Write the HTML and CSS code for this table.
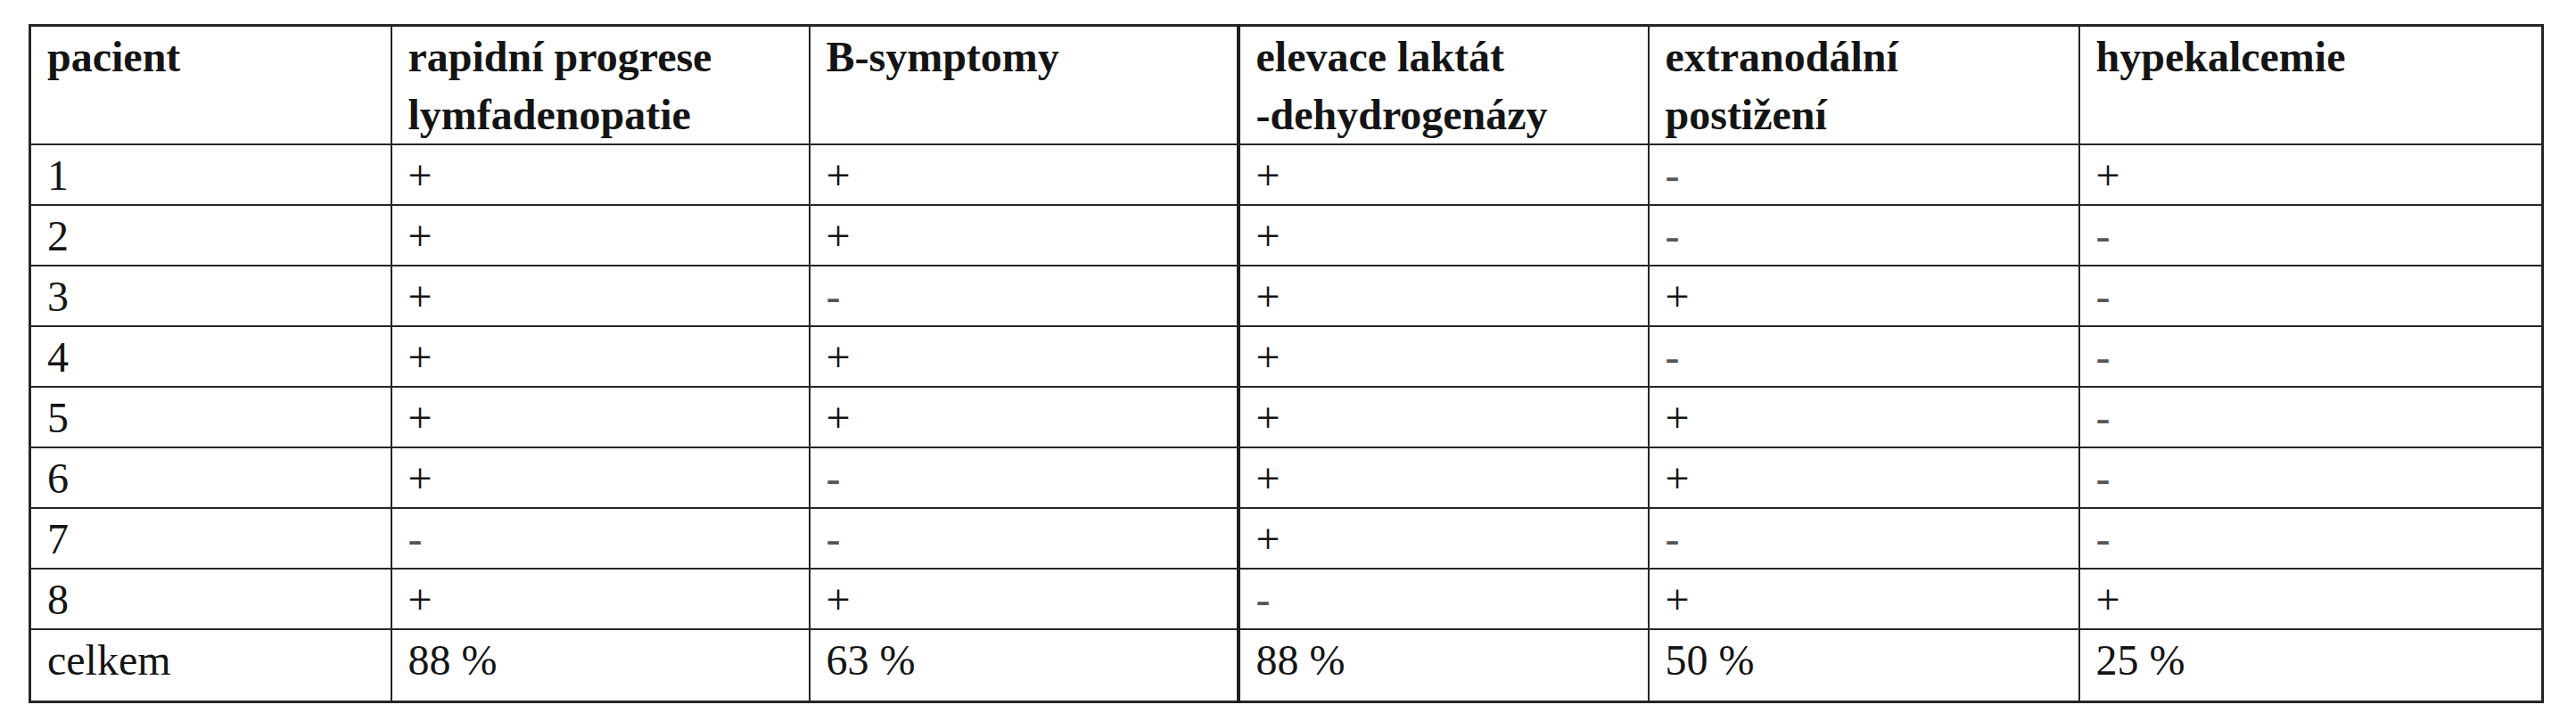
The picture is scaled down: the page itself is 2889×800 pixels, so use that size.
FILE: index.html
```html
<!DOCTYPE html>
<html lang="cs">
<head>
<meta charset="utf-8">
<title>Tabulka</title>
<link rel="stylesheet" href="styles.css">
</head>
<body>
<table class="data">
  <colgroup>
    <col class="c1"><col class="c2"><col class="c3"><col class="c4"><col class="c5"><col class="c6">
  </colgroup>
  <thead>
    <tr class="head">
      <th>pacient</th>
      <th>rapidní progrese<br>lymfadenopatie</th>
      <th>B-symptomy</th>
      <th class="split">elevace laktát<br>-dehydrogenázy</th>
      <th>extranodální<br>postižení</th>
      <th>hypekalcemie</th>
    </tr>
  </thead>
  <tbody>
    <tr><td>1</td><td>+</td><td>+</td><td class="split">+</td><td class="m">-</td><td>+</td></tr>
    <tr><td>2</td><td>+</td><td>+</td><td class="split">+</td><td class="m">-</td><td class="m">-</td></tr>
    <tr><td>3</td><td>+</td><td class="m">-</td><td class="split">+</td><td>+</td><td class="m">-</td></tr>
    <tr><td>4</td><td>+</td><td>+</td><td class="split">+</td><td class="m">-</td><td class="m">-</td></tr>
    <tr><td>5</td><td>+</td><td>+</td><td class="split">+</td><td>+</td><td class="m">-</td></tr>
    <tr><td>6</td><td>+</td><td class="m">-</td><td class="split">+</td><td>+</td><td class="m">-</td></tr>
    <tr><td>7</td><td class="m">-</td><td class="m">-</td><td class="split">+</td><td class="m">-</td><td class="m">-</td></tr>
    <tr><td>8</td><td>+</td><td>+</td><td class="split m">-</td><td>+</td><td>+</td></tr>
    <tr class="total"><td>celkem</td><td>88 %</td><td>63 %</td><td class="split">88 %</td><td>50 %</td><td>25 %</td></tr>
  </tbody>
</table>
</body>
</html>
```
FILE: styles.css
```css
html, body {
  margin: 0;
  padding: 0;
  background: #ffffff;
}

body {
  padding: 27px 0 0 32px;
  color: #141414;
}

.data {
  border-collapse: collapse;
  table-layout: fixed;
  width: 2818px;
  border: 3px solid #262626;
  font-family: "Liberation Serif", "DejaVu Serif", serif;
  font-size: 48px;
  line-height: 65px;
}

.c1 { width: 405px; }
.c2 { width: 469px; }
.c3 { width: 481px; }
.c4 { width: 460px; }
.c5 { width: 483px; }
.c6 { width: 520px; }

.data th,
.data td {
  font-family: "Liberation Serif", "DejaVu Serif", serif;
  border: 2px solid #262626;
  padding: 1px 18px 0 18px;
  vertical-align: top;
  text-align: left;
  white-space: nowrap;
}

.data th {
  font-weight: bold;
}

.data .split {
  border-left: 4px solid #1e1e1e;
}

.head {
  height: 131px;
}

tbody tr {
  height: 66px;
}

tbody tr.total {
  height: 81px;
}

.m {
  color: #555555;
}
```
